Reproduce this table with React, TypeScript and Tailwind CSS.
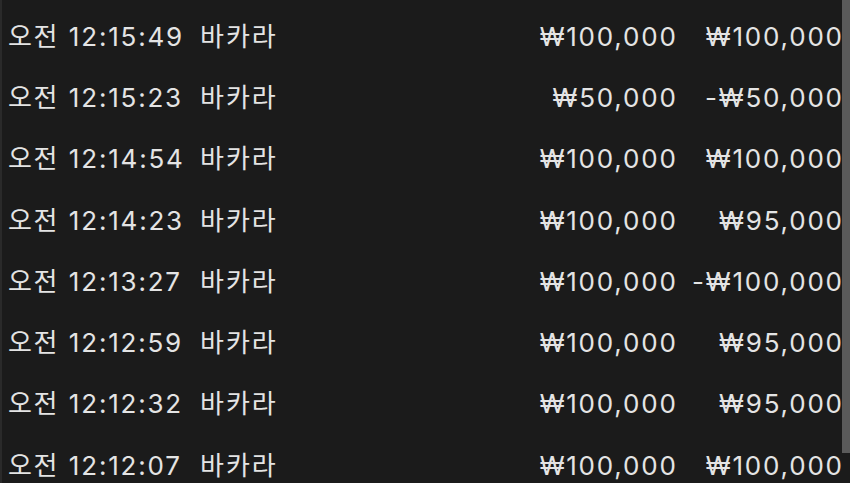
const rows = [
  { time: "12:15:49", game: "바카라", bet: "₩100,000", result: "₩100,000" },
  { time: "12:15:23", game: "바카라", bet: "₩50,000", result: "-₩50,000" },
  { time: "12:14:54", game: "바카라", bet: "₩100,000", result: "₩100,000" },
  { time: "12:14:23", game: "바카라", bet: "₩100,000", result: "₩95,000" },
  { time: "12:13:27", game: "바카라", bet: "₩100,000", result: "-₩100,000" },
  { time: "12:12:59", game: "바카라", bet: "₩100,000", result: "₩95,000" },
  { time: "12:12:32", game: "바카라", bet: "₩100,000", result: "₩95,000" },
  { time: "12:12:07", game: "바카라", bet: "₩100,000", result: "₩100,000" },
];

export default function App() {
  return (
    <div
      className="flex h-[483px] w-[850px] overflow-hidden bg-[#1b1b1b] text-[#e4e4e4]"
      style={{ fontFamily: 'Inter, "Noto Sans CJK KR", sans-serif' }}
    >
      <div className="w-[2px] bg-[#2a2a2a]" />
      <div className="flex-1 pt-[6px]">
        {rows.map((r, i) => (
          <div key={i} className="flex h-[61.3px] items-center leading-none">
            <div className="flex w-[198px] items-center pl-[6px]">
              <span className="text-[26px] tracking-[1.5px]">오전</span>
              <span className="ml-[10px] text-[26px] tracking-[1.8px]">{r.time}</span>
            </div>
            <div className="w-[120px] text-[26px] tracking-[2px]">{r.game}</div>
            <div className="flex-1 text-right text-[26px] tracking-[1.8px] mr-[-1.8px]">{r.bet}</div>
            <div className="w-[168px] text-right text-[26px] tracking-[1.8px] mr-[-1.8px]">{r.result}</div>
          </div>
        ))}
      </div>
      <div className="w-[8px]">
        <div className="h-[453px] bg-[#5a5a5a]" />
      </div>
    </div>
  );
}
